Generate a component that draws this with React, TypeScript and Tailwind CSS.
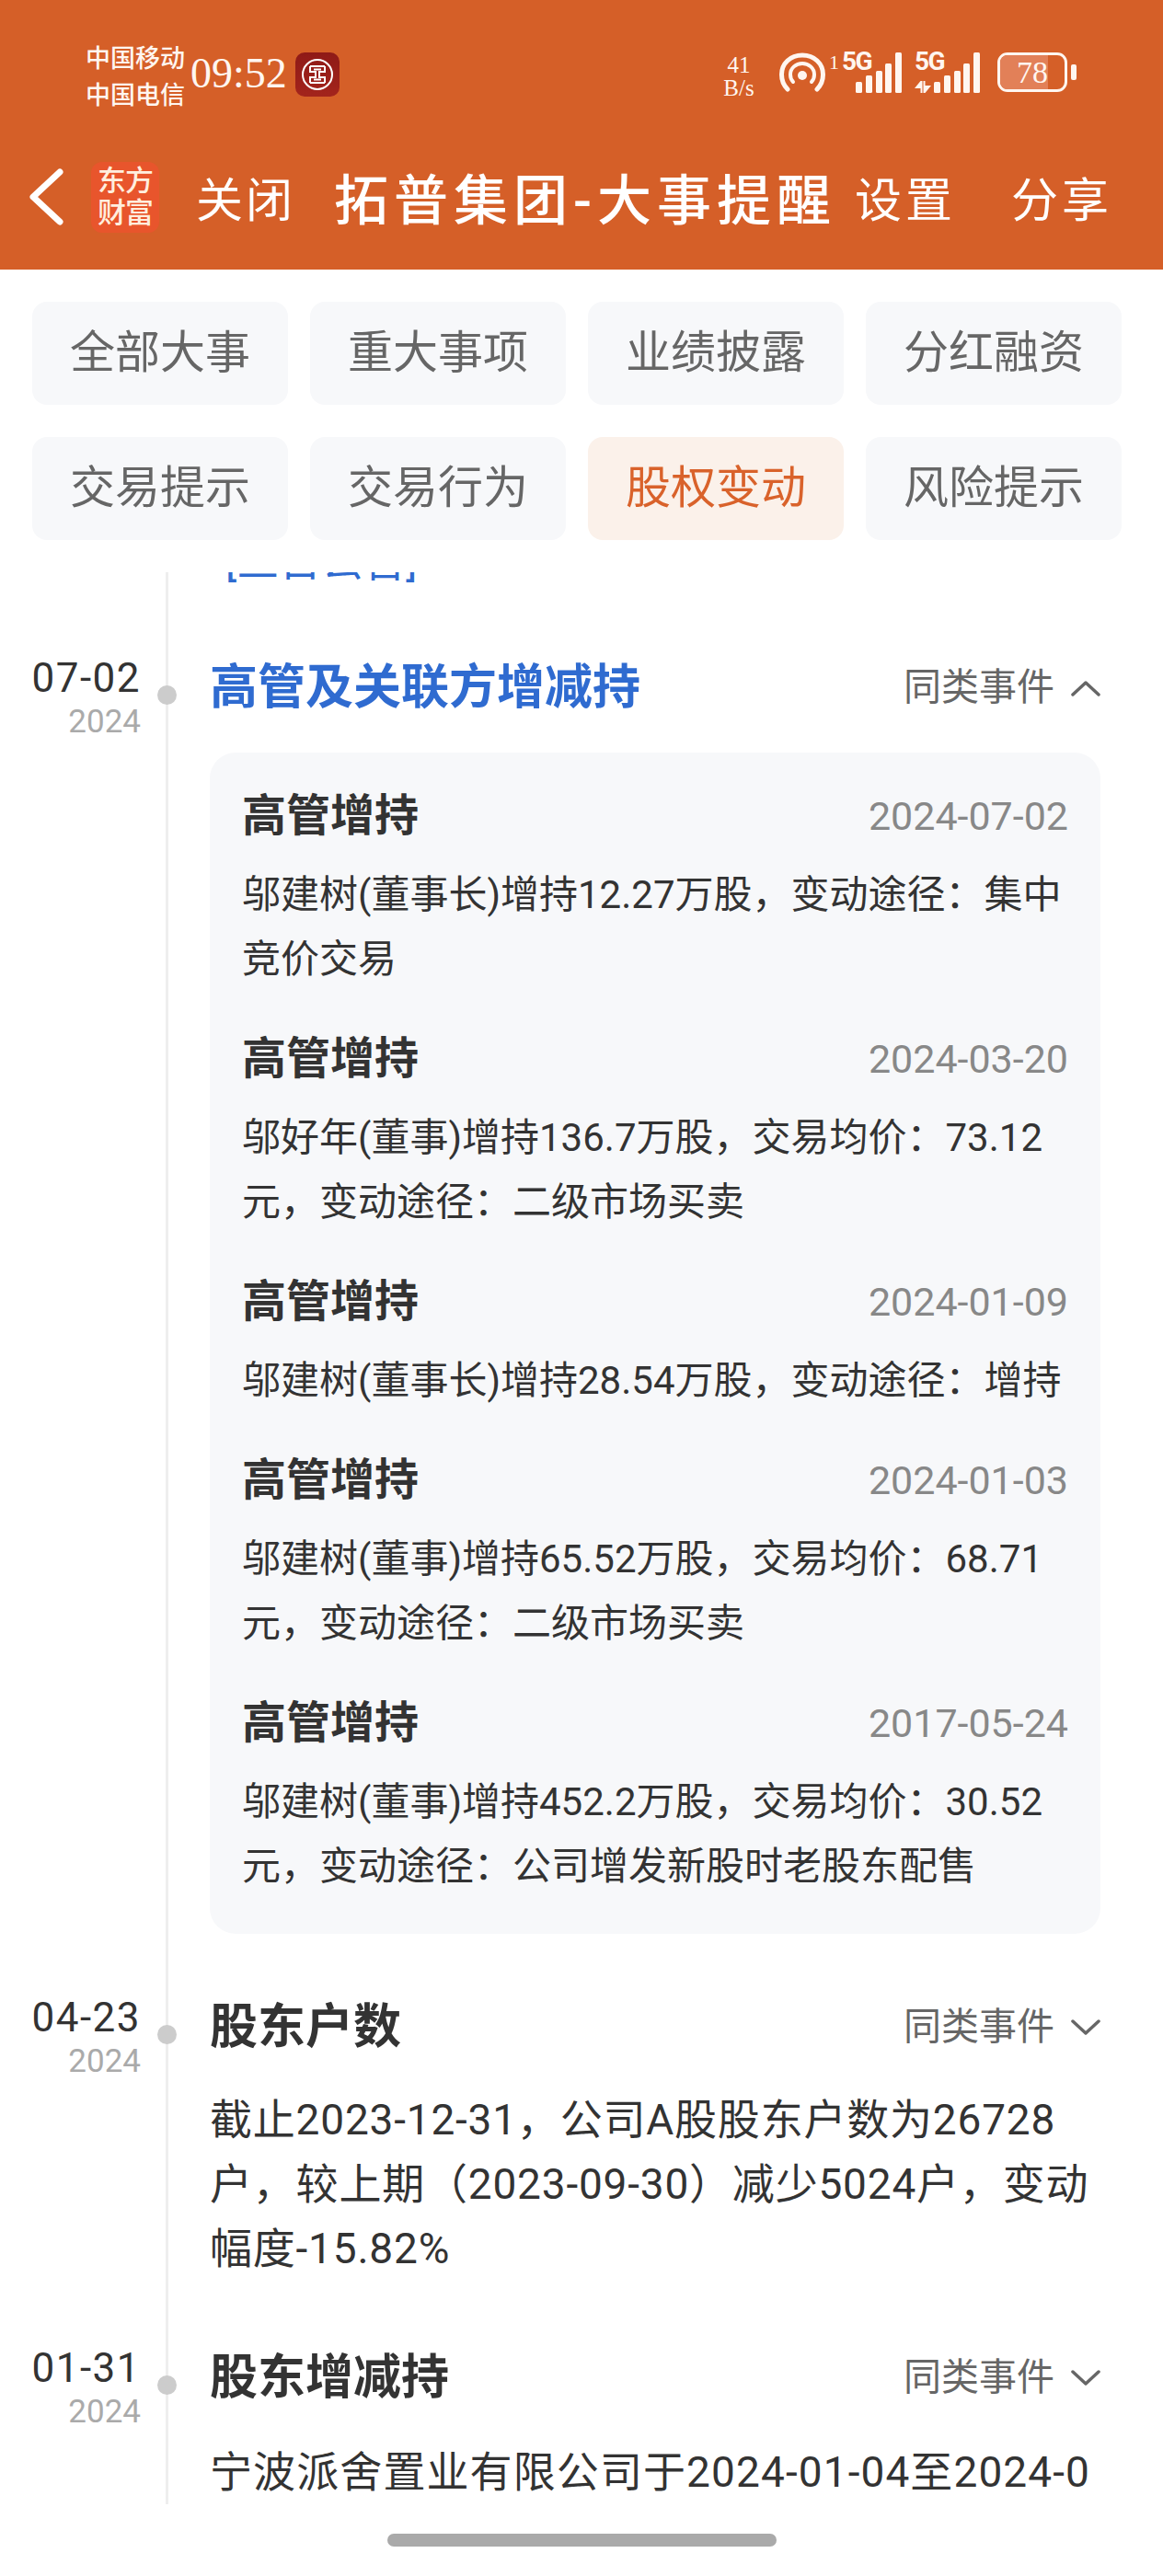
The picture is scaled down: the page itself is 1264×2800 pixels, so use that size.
import React from 'react';

const sans = { fontFamily: '"Roboto", "Noto Sans CJK SC", sans-serif' };

const tabs = ['全部大事', '重大事项', '业绩披露', '分红融资', '交易提示', '交易行为', '股权变动', '风险提示'];

const holdings = [
  { date: '2024-07-02', lines: ['邬建树(董事长)增持12.27万股，变动途径：集中', '竞价交易'] },
  { date: '2024-03-20', lines: ['邬好年(董事)增持136.7万股，交易均价：73.12', '元，变动途径：二级市场买卖'] },
  { date: '2024-01-09', lines: ['邬建树(董事长)增持28.54万股，变动途径：增持'] },
  { date: '2024-01-03', lines: ['邬建树(董事)增持65.52万股，交易均价：68.71', '元，变动途径：二级市场买卖'] },
  { date: '2017-05-24', lines: ['邬建树(董事)增持452.2万股，交易均价：30.52', '元，变动途径：公司增发新股时老股东配售'] },
];

const BankIcon = () => (
  <svg width="48" height="48" viewBox="0 0 48 48">
    <defs>
      <linearGradient id="bank" x1="0" y1="0" x2="0" y2="1">
        <stop offset="0" stopColor="#8f1a17" />
        <stop offset="1" stopColor="#a3241c" />
      </linearGradient>
    </defs>
    <rect width="48" height="48" rx="10" fill="url(#bank)" />
    <circle cx="24" cy="24" r="16" fill="none" stroke="#fff" strokeWidth="2" />
    <path d="M16 15h16M16 33h16M16 15v6h6v6h-6v6M32 15v6h-6v6h6v6M20 18.500h8M20 29.500h8" fill="none" stroke="#fff" strokeWidth="2" />
  </svg>
);

const Hotspot = () => (
  <svg width="50" height="43" viewBox="0 0 50 43" fill="none" stroke="#fff6f0" strokeWidth="5" strokeLinecap="round">
    <path d="M9 40C3 34 2.500 28 2.500 24 2.500 12 12 3 25 3s22.500 9 22.500 21c0 4-.5 10-6.500 16" />
    <path d="M15 32c-2-2-3-5-3-8 0-7 6-12 13-12s13 5 13 12c0 3-1 6-3 8" strokeWidth="4" />
    <circle cx="25" cy="25" r="5" fill="#fff6f0" stroke="none" />
  </svg>
);

const Bars = ({ heights }: { heights: number[] }) => (
  <div className="flex items-end gap-[3.750px] h-[44px]">
    {heights.map((h, i) => (
      <div key={i} className="w-[7px] rounded-[1.500px] bg-[#fff6f0]" style={{ height: h }} />
    ))}
  </div>
);

const Battery = () => (
  <div className="flex items-center gap-[4px]">
    <div className="relative w-[76px] h-[43px] rounded-[11px] border-[3px] border-[#fff6f0] overflow-hidden flex items-center justify-center">
      <div className="absolute left-0 top-0 bottom-0 w-[52px] bg-[#e28058]" />
      <span className="relative text-[34px] leading-none text-[#fff6f0] font-['Liberation_Serif',serif]">78</span>
    </div>
    <div className="w-[6px] h-[17px] rounded-[2px] bg-[#fff6f0]" />
  </div>
);

const Chevron = ({ up }: { up?: boolean }) => (
  <svg width="32" height="18" viewBox="0 0 32 18" fill="none" stroke="#666" strokeWidth="3.500" strokeLinecap="round" strokeLinejoin="round">
    <path d={up ? 'M2 16 16 3l14 13' : 'M2 2l14 13L30 2'} />
  </svg>
);

const Header = () => (
  <div className="h-[293px] bg-[#d55f28] text-white shrink-0">
    <div className="h-[165px] pt-[57px] pl-[93px] pr-[94px] flex items-start">
      <div className="w-[110px] text-[27px] leading-[40px] -mt-[13px] font-medium text-[#fff6f0]">
        <div>中国移动</div>
        <div>中国电信</div>
      </div>
      <div className="ml-[4px] w-[105px] text-[46px] leading-[44px] mt-[1px] text-[#fff6f0] font-['Liberation_Serif',serif]">09:52</div>
      <div className="ml-[9px]"><BankIcon /></div>
      <div className="ml-auto flex items-start text-[#fff6f0]">
        <div className="w-[40px] mr-[24px] mt-[1px] text-center text-[25px] leading-[25px] font-['Liberation_Serif',serif]">
          <div>41</div>
          <div>B/s</div>
        </div>
        <Hotspot />
        <span className="ml-[4px] text-[22px] leading-[22px] font-['Liberation_Serif',serif]">1</span>
        <div className="relative ml-[3px] w-[65px] h-[44px] flex justify-end">
          <span className="absolute left-0 top-[-4px] text-[28px] leading-[28px] font-bold tracking-[-1.500px]">5G</span>
          <Bars heights={[12, 19, 24, 32, 44]} />
        </div>
        <div className="relative ml-[14px] w-[71px] h-[44px] flex justify-end">
          <span className="absolute left-0 top-[-4px] text-[28px] leading-[28px] font-bold tracking-[-1.500px]">5G</span>
          <svg className="absolute left-0 bottom-0" width="18" height="13" viewBox="0 0 18 13" fill="#fff6f0">
            <path d="M6.500 0H8.500V13H6.500V8H0zM9.500 0H11.500V5H18L11.500 13H9.500z" />
          </svg>
          <Bars heights={[12, 19, 24, 32, 44]} />
        </div>
        <div className="ml-[19px]"><Battery /></div>
      </div>
    </div>
    <div className="h-[128px] flex items-center pl-[31px] pb-[30px]">
      <svg width="38" height="62" viewBox="0 0 38 62" fill="none" stroke="#fff" strokeWidth="7" strokeLinecap="round" strokeLinejoin="round">
        <path d="M34 4 5 31l29 27" />
      </svg>
      <div className="ml-[30px] w-[74px] h-[77px] rounded-[12px] bg-[#e8552c] flex flex-col items-center justify-center text-[31px] leading-[35px] font-medium text-[#ffeede] tracking-[-1px]">
        <div>东方</div>
        <div>财富</div>
      </div>
      <div className="ml-[40px] mt-[10px] text-[51px] tracking-[3px] whitespace-nowrap">关闭</div>
      <div className="ml-[42px] mt-[10px] text-[59px] tracking-[6px] font-medium whitespace-nowrap">拓普集团-大事提醒</div>
      <div className="ml-[20px] mt-[10px] text-[51px] tracking-[4px] whitespace-nowrap">设置</div>
      <div className="ml-[60px] mt-[10px] text-[51px] tracking-[4px] whitespace-nowrap">分享</div>
    </div>
  </div>
);

const TabBar = () => (
  <div className="shrink-0 grid grid-cols-4 gap-x-[24px] gap-y-[35px] pt-[35px] pl-[35px] pr-[45px] pb-[35px] bg-white">
    {tabs.map(t => (
      <div
        key={t}
        className={`h-[112px] rounded-[16px] flex items-center justify-center text-[49px] ${
          t === '股权变动' ? 'bg-[#fbf1ea] text-[#d9622b]' : 'bg-[#f7f8fa] text-[#666666]'
        }`}
      >
        {t}
      </div>
    ))}
  </div>
);

const Row = ({
  date,
  year,
  children,
}: {
  date: string;
  year: string;
  children: React.ReactNode;
}) => (
  <div className="flex">
    <div className="relative w-[183px] shrink-0 border-r-[3px] border-[#eeeeee] pr-[27px] text-right">
      <div className="text-[44px] tracking-[1.500px] leading-[48px] text-[#333333] mt-[-5px]">{date}</div>
      <div className="text-[35px] leading-[40px] text-[#aaaaaa] mt-[4px]">{year}</div>
      <div className="absolute right-[-12px] top-[27px] w-[21px] h-[21px] rounded-full bg-[#cccccc]" />
    </div>
    <div className="ml-[45px] w-[968px]">{children}</div>
  </div>
);

const RowTitle = ({ title, up, active }: { title: string; up?: boolean; active?: boolean }) => (
  <div className="flex items-center justify-between h-[60px]">
    <div className={`text-[52px] leading-[60px] font-bold ${active ? 'text-[#2f6bd0]' : 'text-[#333333]'}`}>{title}</div>
    <div className="flex items-center text-[41px] text-[#666666]">
      <span>同类事件</span>
      <span className="ml-[18px]"><Chevron up={up} /></span>
    </div>
  </div>
);

const Timeline = () => (
  <div className="flex-1 overflow-hidden">
    <div className="flex h-[70px] -mt-[47px]">
      <div className="w-[183px] shrink-0 border-r-[3px] border-[#eeeeee]" />
      <div className="ml-[62px] text-[46px] leading-[70px] text-[#2f6bd0] whitespace-nowrap">[三日公告]</div>
    </div>
    <div className="h-[73px] w-[183px] border-r-[3px] border-[#eeeeee]" />
    <Row date="07-02" year="2024">
      <RowTitle title="高管及关联方增减持" up active />
      <div className="mt-[40px] rounded-[28px] bg-[#f7f8fa] px-[35px] pt-[18px] pb-[16px]">
        {holdings.map(item => (
          <div key={item.date} className="pt-[24px] pb-[22px]">
            <div className="flex items-center justify-between h-[54px]">
              <div className="text-[48px] leading-[54px] font-bold text-[#333333]">高管增持</div>
              <div className="text-[43px] text-[#888888]">{item.date}</div>
            </div>
            <div className="mt-[24px] text-[42px] leading-[70px] text-[#333333] whitespace-nowrap">
              {item.lines.map(l => <div key={l}>{l}</div>)}
            </div>
          </div>
        ))}
      </div>
      <div className="h-[72px]" />
    </Row>
    <Row date="04-23" year="2024">
      <RowTitle title="股东户数" />
      <div className="mt-[35px] text-[46px] tracking-[0.800px] leading-[70px] text-[#333333] whitespace-nowrap">
        <div>截止2023-12-31，公司A股股东户数为26728</div>
        <div>户，较上期（2023-09-30）减少5024户，变动</div>
        <div>幅度-15.82%</div>
      </div>
      <div className="h-[76px]" />
    </Row>
    <Row date="01-31" year="2024">
      <RowTitle title="股东增减持" />
      <div className="mt-[37px] text-[46px] tracking-[1.100px] leading-[70px] text-[#333333] whitespace-nowrap h-[106px]">
        宁波派舍置业有限公司于2024-01-04至2024-0
      </div>
    </Row>
  </div>
);

const App: React.FC = () => {
  return (
    <div className="w-[1264px] h-[2800px] bg-white flex flex-col overflow-hidden" style={sans}>
      <Header />
      <TabBar />
      <div className="h-[2100px] flex flex-col overflow-hidden">
        <Timeline />
      </div>
      <div className="flex-1 flex justify-center pt-[32px]">
        <div className="w-[423px] h-[14px] rounded-full bg-[#aaaaaa]" />
      </div>
    </div>
  );
};

export default App;
